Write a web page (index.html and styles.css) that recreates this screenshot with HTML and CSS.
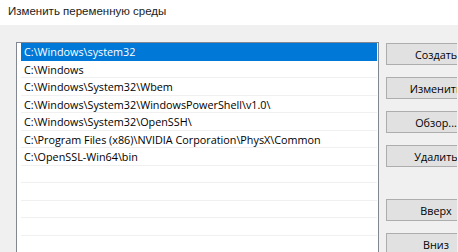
FILE: index.html
```html
<!DOCTYPE html>
<html>
    <head>
        <meta charset="utf-8">
        <title>Изменить переменную среды</title>
        <link rel="stylesheet" href="styles.css">
    </head>
    <body>
        <div class="title">Изменить переменную среды</div>
        <div class="main">
            <div class="list">
                <div class="row selected">C:\Windows\system32</div>
                <div class="row">C:\Windows</div>
                <div class="row">C:\Windows\System32\Wbem</div>
                <div class="row">C:\Windows\System32\WindowsPowerShell\v1.0\</div>
                <div class="row">C:\Windows\System32\OpenSSH\</div>
                <div class="row">C:\Program Files (x86)\NVIDIA Corporation\PhysX\Common</div>
                <div class="row">C:\OpenSSL-Win64\bin</div>
                <div class="row"></div>
                <div class="row"></div>
                <div class="row"></div>
                <div class="row"></div>
                <div class="row"></div>
            </div>
            <div class="buttons">
                <button class="btn">Создать</button>
                <button class="btn">Изменить</button>
                <button class="btn">Обзор...</button>
                <button class="btn">Удалить</button>
                <button class="btn btn-up">Вверх</button>
                <button class="btn">Вниз</button>
            </div>
        </div>
    </body>
</html>
```

FILE: styles.css
```css
html,body{
    overflow: hidden;
}
body{
    margin: 0;
    background: #f0f0f0;
    font-family: "Open Sans", "Noto Sans", sans-serif;
    font-size: 10.8px;
    color: #000;
    height: 252px;
}
.title{
    height: 25px;
    line-height: 23px;
    padding-left: 8px;
    background: #fff;
    font-family: "Liberation Sans", Arial, sans-serif;
    font-size: 11.5px;
    color: #1a1a1a;
}
.main{
    display: flex;
    align-items: flex-start;
    padding: 17px 0 0 16px;
    height: 210px;
    overflow: hidden;
}
.list{
    width: 356px;
    height: 230px;
    flex: none;
    border: 1px solid #828790;
    border-bottom: none;
    background: #fff;
    padding: 0 1px 0 4px;
}
.row{
    height: 17.5px;
    line-height: 17px;
    box-sizing: border-box;
    border-bottom: 1px solid #f0f0f0;
    padding-left: 3px;
    white-space: nowrap;
}
.row.selected{
    background: #0078d7;
    color: #fff;
    border-bottom-color: #0078d7;
}
.buttons{
    display: flex;
    flex-direction: column;
    gap: 12px;
    margin-left: 7px;
    padding-top: 1px;
    width: 71px;
    overflow: hidden;
}
.btn{
    width: 100px;
    height: 22px;
    flex: none;
    border: 1px solid #adadad;
    background: #e1e1e1;
    font-family: "Open Sans", "Noto Sans", sans-serif;
    font-size: 10.8px;
    color: #000;
    padding: 0;
}
.btn-up{
    margin-top: 20px;
}
```
